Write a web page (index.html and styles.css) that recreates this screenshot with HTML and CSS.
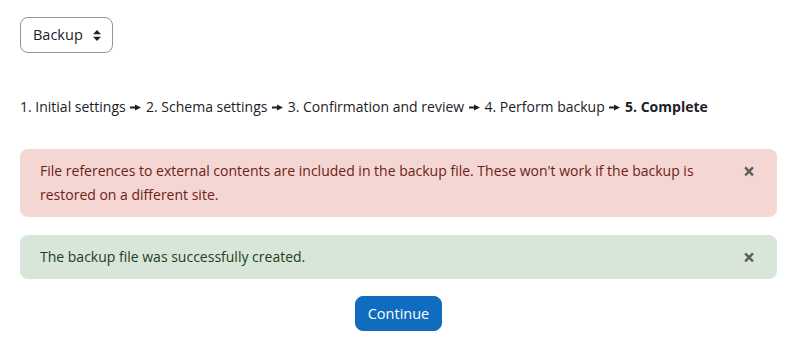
FILE: index.html
```html
<!DOCTYPE html>
<html lang="en">
<head>
    <meta charset="UTF-8">
    <meta name="viewport" content="width=device-width, initial-scale=1.0">
    <title>Backup</title>
    <link rel="stylesheet" href="styles.css">
</head>
<body>
    <div class="main-content">
        <div class="select-wrap">
            <div class="custom-select">
                <span>Backup</span>
                <svg class="select-arrows" width="8" height="11" viewBox="0 0 8 11">
                    <path d="M4 0 L8 4.3 L0 4.3 Z" fill="#1d2125"/>
                    <path d="M4 11 L8 6.7 L0 6.7 Z" fill="#1d2125"/>
                </svg>
            </div>
        </div>

        <div class="progress-steps">
            <span>1. Initial settings</span>
            <svg class="sep" width="11" height="7" viewBox="0 0 11 7"><path d="M0 2.5 H5 V0.5 L11 3.5 L5 6.5 V4.5 H0 Z" fill="#1d2125"/></svg>
            <span>2. Schema settings</span>
            <svg class="sep" width="11" height="7" viewBox="0 0 11 7"><path d="M0 2.5 H5 V0.5 L11 3.5 L5 6.5 V4.5 H0 Z" fill="#1d2125"/></svg>
            <span>3. Confirmation and review</span>
            <svg class="sep" width="11" height="7" viewBox="0 0 11 7"><path d="M0 2.5 H5 V0.5 L11 3.5 L5 6.5 V4.5 H0 Z" fill="#1d2125"/></svg>
            <span>4. Perform backup</span>
            <svg class="sep" width="11" height="7" viewBox="0 0 11 7"><path d="M0 2.5 H5 V0.5 L11 3.5 L5 6.5 V4.5 H0 Z" fill="#1d2125"/></svg>
            <strong>5. Complete</strong>
        </div>

        <div class="alert alert-danger">
            <div class="alert-text">File references to external contents are included in the backup file. These won't work if the backup is restored on a different site.</div>
            <button class="close" type="button">&times;</button>
        </div>

        <div class="alert alert-success">
            <div class="alert-text">The backup file was successfully created.</div>
            <button class="close" type="button">&times;</button>
        </div>

        <div class="form-actions">
            <button type="button" class="btn-primary">Continue</button>
        </div>
    </div>
</body>
</html>
```

FILE: styles.css
```css
body {
    margin: 0;
    font-family: "Open Sans", "Noto Sans", "Liberation Sans", sans-serif;
    font-size: 14px;
    line-height: 1.5;
    color: #1d2125;
    background: #fff;
}
.main-content {
    padding: 17px 24px 0 20px;
}
.select-wrap {
    margin-bottom: 42px;
}
.custom-select {
    display: inline-flex;
    align-items: center;
    gap: 10px;
    height: 36px;
    box-sizing: border-box;
    padding: 0 11px 0 12px;
    border: 1px solid #8f959e;
    border-radius: 8px;
    font-size: 14.5px;
    color: #1d2125;
}
.select-arrows {
    display: block;
}
.progress-steps {
    margin-bottom: 30px;
    line-height: 24px;
}
.progress-steps .sep {
    margin: 0 1px;
    vertical-align: 1px;
}
.progress-steps strong {
    font-weight: 700;
}
.alert {
    display: flex;
    align-items: flex-start;
    padding: 10px 20px;
    border-radius: 8px;
    margin-bottom: 18px;
    line-height: 24px;
}
.alert-text {
    flex: 1;
    padding-right: 40px;
}
.alert-danger {
    background: #f4d6d2;
    color: #6e211a;
}
.alert-success {
    background: #d7e6d9;
    color: #1c3f1a;
}
.close {
    background: none;
    border: none;
    padding: 0;
    margin-right: 2px;
    font-family: inherit;
    font-size: 21px;
    line-height: 24px;
    font-weight: 700;
    color: #5a5a5a;
    cursor: pointer;
}
.form-actions {
    display: flex;
    justify-content: center;
    margin-top: -1px;
}
.btn-primary {
    background: #0f6cbf;
    color: #fff;
    border: 1px solid #0f6cbf;
    border-radius: 8px;
    padding: 6px 12px;
    font-family: inherit;
    font-size: 14.5px;
    line-height: 21px;
    cursor: pointer;
}
```
